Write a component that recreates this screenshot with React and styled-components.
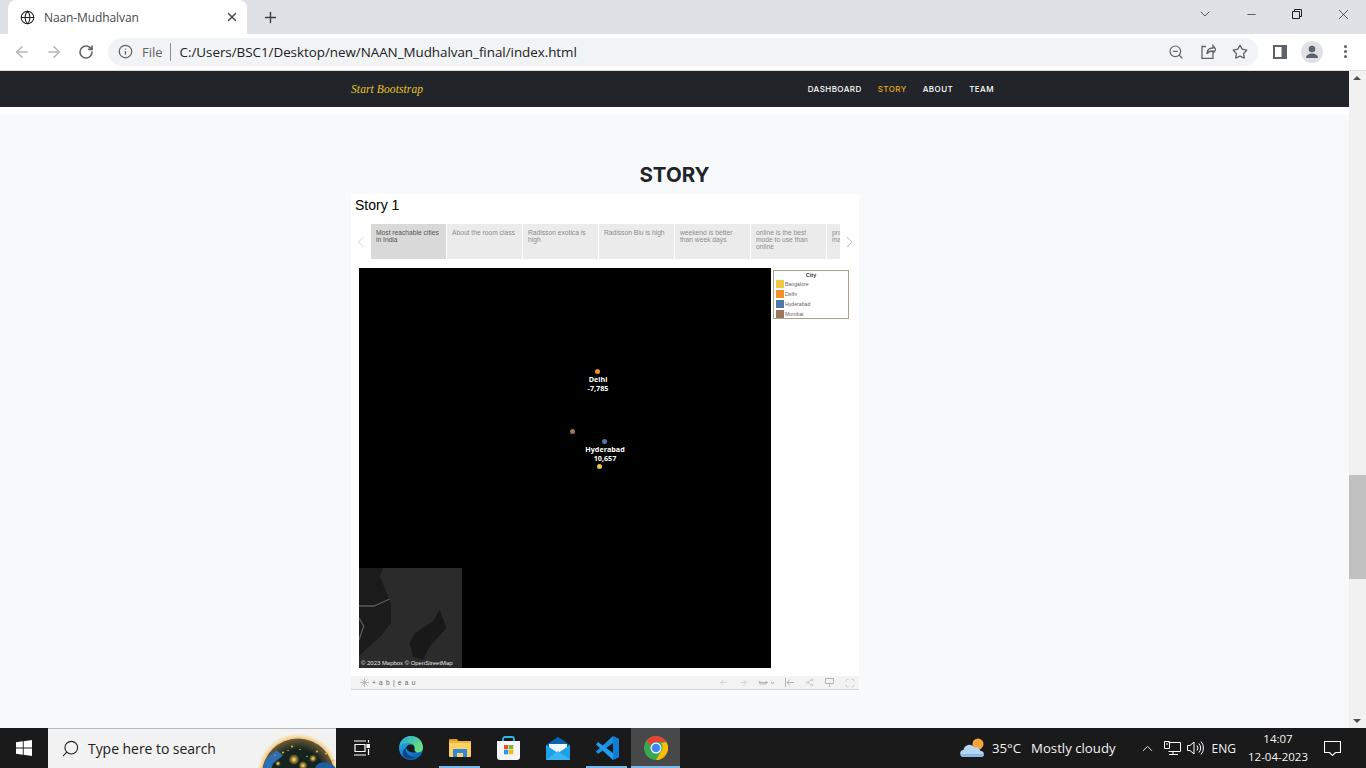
import React from "react";
import styled, { createGlobalStyle } from "styled-components";
import { ArrowLeft, ArrowRight, RotateCw, Info, ZoomOut, Star, MoreVertical, Globe, X, Plus, Search, ChevronDown, ChevronUp, ChevronLeft, ChevronRight, Minus, Share2, Maximize } from "lucide-react";

const Global = createGlobalStyle`
  html, body { margin: 0; padding: 0; height: 100%; overflow: hidden; }
  * { box-sizing: border-box; }
  #root { height: 768px; }
`;

const Screen = styled.div`
  width: 1366px; height: 768px; display: flex; flex-direction: column; overflow: hidden;
  background: #fff; font-family: "Open Sans", "Liberation Sans", sans-serif;
`;

const TabStrip = styled.div`
  height: 34px; flex: none; background: #dee1e6; display: flex; align-items: stretch; padding-left: 8px; color: #3c4043;
`;
const Tab = styled.div`
  width: 239px; background: #fff; border-radius: 8px 8px 0 0; display: flex; align-items: center; padding: 0 8px 0 12px;
`;
const TabTitle = styled.span`
  font-size: 12px; margin-left: 9px; flex: 1; color: #45484c; letter-spacing: -0.1px; white-space: nowrap;
`;
const NewTab = styled.div`
  width: 46px; display: flex; align-items: center; justify-content: center; color: #3c4043;
`;
const StripSpacer = styled.div`flex: 1;`;
const WinButton = styled.div`
  width: 46px; display: flex; align-items: center; justify-content: center; color: #202124; padding-bottom: 6px;
`;

const Toolbar = styled.div`
  height: 37px; flex: none; background: #fff; display: flex; align-items: center; padding: 0 0 1px 6px; border-bottom: 1px solid #dadce0;
`;
const NavIcon = styled.div`
  width: 32px; margin-left: ${p => p.$m || 0}px; display: flex; align-items: center; justify-content: center; color: ${p => (p.$off ? "#b4b6b9" : "#5f6368")};
`;
const Omnibox = styled.div`
  width: 1150px; height: 28px; margin-left: 6px; border-radius: 14px; background: #f1f3f4; display: flex; align-items: center; padding: 0 2px 0 10px;
`;
const FileLabel = styled.span`
  font-size: 13px; color: #5f6368; margin-left: 9px; padding-right: 7px; border-right: 1px solid #8b8e92; line-height: 18px;
`;
const Url = styled.span`
  font-size: 13.4px; color: #202124; margin-left: 9px; flex: 1; white-space: nowrap; letter-spacing: -0.03px;
`;
const OmniIcon = styled.div`
  width: 32px; display: flex; justify-content: center; color: #5f6368;
`;
const Avatar = styled.div`
  width: 22px; height: 22px; margin-left: 5px; border-radius: 50%; background: #dee1e6; overflow: hidden; display: flex; align-items: center; justify-content: center;
`;

const Main = styled.div`
  flex: 1; min-height: 0; display: flex; background: #f8f9fa;
`;
const Page = styled.div`
  flex: 1; min-width: 0; display: flex; flex-direction: column;
`;
const Navbar = styled.nav`
  height: 36px; flex: none; background: #212529; display: flex; justify-content: center; padding-bottom: 1px;
`;
const NavInner = styled.div`
  width: 647px; display: flex; align-items: center; justify-content: space-between;
`;
const Brand = styled.span`
  font-family: "Liberation Serif", serif; font-style: italic; font-size: 11.5px; color: #e9c02b; letter-spacing: 0.1px;
`;
const NavLinks = styled.div`
  display: flex; gap: 16px; padding-right: 4px;
`;
const NavLink = styled.span`
  font-family: Inter, "Liberation Sans", sans-serif; font-size: 8px; font-weight: 500; letter-spacing: 0.45px;
  color: ${p => (p.$active ? "#e8a818" : "#fff")};
`;
const WhiteBand = styled.div`height: 7px; background: #fff; flex: none;`;
const Section = styled.section`
  width: 647px; margin: 0 auto; padding-top: 48px; flex: 1;
`;
const Heading = styled.h2`
  margin: 0; height: 26px; line-height: 26px; text-align: center; font-family: Inter, "Liberation Sans", sans-serif; font-size: 20.5px; font-weight: 700; color: #212529;
`;

const Viz = styled.div`
  width: 508px; margin-top: 6px; background: #fff;
`;
const StoryTitle = styled.div`
  height: 30px; padding: 3px 0 0 4px; font-family: "Liberation Sans", sans-serif; font-size: 14px; line-height: 17px; color: #000;
`;
const Flow = styled.div`
  height: 35px; display: flex; align-items: center;
`;
const FlowArrow = styled.div`
  width: ${p => p.$w}px; flex: none; display: flex; justify-content: center; color: #c9c9c9;
`;
const FlowClip = styled.div`
  width: 469px; height: 35px; overflow: hidden; display: flex; gap: 1px;
`;
const FlowTab = styled.div`
  width: 75px; flex: none; height: 35px; padding: 5px 4px 0 5px; background: ${p => (p.$active ? "#d9d9d9" : "#ebebeb")};
  color: ${p => (p.$active ? "#555" : "#8c8c8c")}; font-family: "Liberation Sans", sans-serif; font-size: 6.7px; line-height: 7px; white-space: pre-line;
`;
const Board = styled.div`
  height: 417px; padding: 9px 0 0 8px; display: flex; align-items: flex-start; gap: 2px;
`;
const MapBox = styled.div`
  position: relative; width: 412px; height: 400px; background: #000; overflow: hidden;
`;
const Dot = styled.span`
  position: absolute; left: ${p => p.$x - 2.5}px; top: ${p => p.$y - 2.5}px; width: 5px; height: 5px; border-radius: 50%; background: ${p => p.$c};
`;
const MapLabel = styled.div`
  position: absolute; left: ${p => p.$x - 40}px; top: ${p => p.$y}px; width: 80px; text-align: center; color: #fff;
  font-family: "Open Sans", sans-serif; font-weight: 700; font-size: 7.2px; line-height: 9px;
`;
const Inset = styled.svg`
  position: absolute; left: 0; bottom: 0; display: block;
`;
const Credit = styled.span`
  position: absolute; left: 2px; bottom: 1px; color: #e8e8e8; font-family: "Liberation Sans", sans-serif; font-size: 5.95px; line-height: 7px; white-space: nowrap;
`;
const Legend = styled.div`
  width: 76px; height: 49px; margin-top: 2px; border: 1px solid #aaa58a; padding: 1px 2px;
  font-family: "Liberation Sans", sans-serif;
`;
const LegendTitle = styled.div`
  text-align: center; font-size: 5.6px; font-weight: 700; line-height: 7px; color: #333; height: 7px;
`;
const LegendRow = styled.div`
  height: 10px; display: flex; align-items: center; gap: 1px; font-size: 5.2px; color: #666;
`;
const Swatch = styled.span`
  width: 8px; height: 8px; flex: none; background: ${p => p.$c};
`;
const VizBar = styled.div`
  height: 14px; background: #f3f3f3; border-bottom: 1px solid #d4d4d4; display: flex; align-items: center; padding: 0 4px 0 9px; color: #c4c4c4;
`;
const Wordmark = styled.span`
  font-family: "Liberation Sans", sans-serif; font-size: 6.5px; letter-spacing: 0.75px; color: #666; margin-left: 3px; flex: 1;
`;
const BarIcons = styled.div`
  display: flex; align-items: center; gap: 11px; color: #b4b4b4;
`;

const Scrollbar = styled.div`
  width: 17px; flex: none; background: #f1f1f1; position: relative;
`;
const ArrowCap = styled.div`
  position: absolute; left: 4px; ${p => (p.$down ? "bottom: 5px" : "top: 5px")}; width: 0; height: 0;
  border-left: 4px solid transparent; border-right: 4px solid transparent;
  ${p => (p.$down ? "border-top: 4px solid #505050" : "border-bottom: 4px solid #505050")};
`;
const Thumb = styled.div`
  position: absolute; left: 0; right: 0; top: 404px; height: 104px; background: #c1c1c1;
`;

const Taskbar = styled.div`
  height: 40px; flex: none; background: #1a1a1a; display: flex; align-items: stretch; color: #fff;
`;
const StartBtn = styled.div`
  width: 48px; display: flex; align-items: center; justify-content: center;
`;
const SearchBox = styled.div`
  width: 288px; position: relative; overflow: hidden; background: #f2f2f2; border-top: 1px solid #b9b9b9; display: flex; align-items: center; padding-left: 13px; color: #202020;
`;
const SearchText = styled.span`
  font-size: 14px; margin-left: 8px; letter-spacing: -0.05px;
`;
const Flipped = styled.span`
  display: flex; transform: scaleX(-1);
`;
const Banner = styled.svg`
  position: absolute; right: 0; top: -1px;
`;
const Slots = styled.div`
  display: flex; margin-left: 1px;
`;
const Slot = styled.div`
  position: relative; width: 49px; display: flex; align-items: center; justify-content: center;
  background: ${p => (p.$active ? "#484848" : "transparent")};
  &::after {
    content: ""; position: absolute; left: ${p => (p.$open ? 4 : 0)}px; right: ${p => (p.$open ? 4 : 0)}px; bottom: 0; height: 2px;
    background: ${p => (p.$open || p.$active ? "#76b9ed" : "transparent")};
  }
`;
const Tray = styled.div`
  margin-left: auto; display: flex; align-items: center; padding-right: 25px;
`;
const TrayText = styled.span`
  font-size: ${p => p.$s || 13.2}px; margin-left: ${p => p.$m || 0}px; white-space: nowrap; color: #f3f3f3;
`;
const TrayIcon = styled.span`
  display: flex; margin-left: ${p => p.$m || 0}px;
`;
const Clock = styled.div`
  width: 70px; margin-left: 7px; text-align: center; font-size: 11.5px; line-height: 18px; color: #f3f3f3; white-space: nowrap;
`;

const Thin = styled.svg`
  display: block; fill: none; stroke: currentColor;
`;

const tabs = [
  "Most reachable cities in India",
  "About the room class",
  "Radisson exotica is high",
  "Radisson Blu is high",
  "weekend is better than week days",
  "online is the best mode to use than online",
  "pro\nma",
];
const cities = [
  ["Bangalore", "#edc948"],
  ["Delhi", "#f28e2b"],
  ["Hyderabad", "#4e79a7"],
  ["Mumbai", "#9c755f"],
];
const taskIcons = [
  { k: "view" }, { k: "edge" }, { k: "folder", open: true }, { k: "store" }, { k: "mail" }, { k: "code", open: true }, { k: "chrome", active: true },
];
const glows = [
  [39, 31, 5], [58, 30, 3.5], [48, 37, 4], [23, 35, 2.5], [28, 24, 1.5], [37, 18, 1.5], [45, 21, 1], [62, 23, 1.5], [71, 25, 1.5], [52, 28, 1], [78, 32, 1], [20, 27, 1], [33, 22, 1],
];

function TaskIcon({ k }) {
  if (k === "view") return (
    <Thin width="16" height="16" viewBox="0 0 16 16" strokeWidth="1.2" stroke="#fff">
      <path d="M0 1h12M0 15h12M1 4.500h10v7H1zM14.500 0v2.500M14.500 9v6" />
      <path d="M13 4.500h3v3h-3z" fill="#fff" />
    </Thin>
  );
  if (k === "edge") return (
    <svg width="24" height="24" viewBox="0 0 24 24">
      <defs>
        <linearGradient id="eg" x1="0" y1="0" x2="0.6" y2="1"><stop offset="0" stopColor="#2ab6ec" /><stop offset="1" stopColor="#0b62b4" /></linearGradient>
        <linearGradient id="eg2" x1="0" y1="0" x2="1" y2="0.6"><stop offset="0" stopColor="#21a8d8" /><stop offset="1" stopColor="#6ce07c" /></linearGradient>
      </defs>
      <circle cx="12" cy="12" r="12" fill="url(#eg)" />
      <path d="M1.500 7C4 1.500 9 0 12 0c7 0 12 5.500 12 12 0 4-5 5.500-8 3.500-1-.7-1-1.500-.5-2.500.8-2-1-6-6.500-6-3 0-6 1-7.500 2-.5.300-.7-.500-.5-2z" fill="url(#eg2)" />
      <path d="M7 12c-1 5 3 9 9 9-3 2.500-8 2.500-11-.5-2-2.500-1-8 2-8.500z" fill="#123f8c" />
      <path d="M7 12c1-3 4-4.500 7-3 1 .5 1.500 2 1.500 4-.5 1 .5 2.500 1.500 3-3 1.500-8 0-10-4z" fill="#1a1a1a" />
    </svg>
  );
  if (k === "folder") return (
    <svg width="22" height="18" viewBox="0 0 22 18">
      <path d="M0 1a1 1 0 0 1 1-1h7l2 3H0z" fill="#d99a1e" />
      <rect x="0" y="2" width="22" height="16" rx="1" fill="#fcd267" />
      <rect x="0" y="2" width="22" height="2" fill="#f0b63a" />
      <path d="M4 18v-8h14v8h-4v-4H8v4z" fill="#2f88d8" />
    </svg>
  );
  if (k === "store") return (
    <svg width="23" height="24" viewBox="0 0 23 24">
      <path d="M6 6V3a2 2 0 0 1 2-2h7a2 2 0 0 1 2 2v3" fill="none" stroke="#32b4e8" strokeWidth="1.8" />
      <path d="M0 5h23v16a3 3 0 0 1-3 3H3a3 3 0 0 1-3-3z" fill="#f5f5f5" />
      <rect x="7" y="9" width="4.300" height="4.300" fill="#e8502a" />
      <rect x="12" y="9" width="4.300" height="4.300" fill="#7fba2c" />
      <rect x="7" y="14" width="4.300" height="4.300" fill="#1c9be6" />
      <rect x="12" y="14" width="4.300" height="4.300" fill="#fbb80e" />
    </svg>
  );
  if (k === "mail") return (
    <svg width="24" height="23" viewBox="0 0 24 23">
      <path d="M0 8 12 0l12 8v2H0z" fill="#0a64b4" />
      <path d="M3 7h18v7l-9 4-9-4z" fill="#f0f7fc" />
      <path d="M0 8l12 8 12-8v15H0z" fill="#1da1ea" />
      <path d="M0 23 12 14l12 9z" fill="#39b6f2" />
    </svg>
  );
  if (k === "code") return (
    <svg width="24" height="24" viewBox="0 0 24 24">
      <path d="M18 0 1 15.500 3 18 18 7z" fill="#1a8fe0" />
      <path d="M18 24 1 8.500 3 6 18 17z" fill="#1f9cf0" />
      <path d="M18 0l6 2.800v18.400L18 24z" fill="#0f7fd4" />
    </svg>
  );
  return (
    <svg width="24" height="24" viewBox="0 0 24 24">
      <circle cx="12" cy="12" r="12" fill="#34a853" />
      <path d="M12 0a12 12 0 0 1 10.400 6H12a6 6 0 0 0-5.500 3.600L2.400 4.800A12 12 0 0 1 12 0z" fill="#ea4335" />
      <path d="M22.400 6A12 12 0 0 1 12 24l5.200-9A6 6 0 0 0 17 7z" fill="#fbbc05" />
      <circle cx="12" cy="12" r="5.500" fill="#fff" />
      <circle cx="12" cy="12" r="4.300" fill="#4285f4" />
    </svg>
  );
}

export default function App() {
  return (
    <Screen>
      <Global />
      <TabStrip>
        <Tab>
          <Globe size={15} color="#202124" strokeWidth={1.7} />
          <TabTitle>Naan-Mudhalvan</TabTitle>
          <X size={14} color="#45484c" strokeWidth={2.4} />
        </Tab>
        <NewTab><Plus size={17} strokeWidth={2} /></NewTab>
        <StripSpacer />
        <WinButton><ChevronDown size={16} strokeWidth={1.1} /></WinButton>
        <WinButton><Minus size={13} strokeWidth={1.2} /></WinButton>
        <WinButton>
          <Thin width="10" height="10" viewBox="0 0 10 10" strokeWidth="1"><path d="M.5 2.500h7v7h-7zM2.500 2.500v-2h7v7h-2" /></Thin>
        </WinButton>
        <WinButton><X size={17} strokeWidth={1} /></WinButton>
      </TabStrip>
      <Toolbar>
        <NavIcon $off><ArrowLeft size={18} strokeWidth={2} /></NavIcon>
        <NavIcon $off><ArrowRight size={18} strokeWidth={2} /></NavIcon>
        <NavIcon><RotateCw size={16} strokeWidth={2.4} /></NavIcon>
        <Omnibox>
          <Info size={15} color="#5f6368" strokeWidth={2} />
          <FileLabel>File</FileLabel>
          <Url>C:/Users/BSC1/Desktop/new/NAAN_Mudhalvan_final/index.html</Url>
          <OmniIcon><ZoomOut size={16} strokeWidth={1.8} /></OmniIcon>
          <OmniIcon>
            <Thin width="15" height="15" viewBox="0 0 15 15" strokeWidth="1.3"><path d="M5 2.500H1v12h11v-4M6 10c0-4 2.500-6 6-6V1.500l3 4-3 4V7c-3 0-5 1-6 3z" /></Thin>
          </OmniIcon>
          <OmniIcon><Star size={16} strokeWidth={1.9} /></OmniIcon>
        </Omnibox>
        <NavIcon $m={6}>
          <Thin width="14" height="14" viewBox="0 0 14 14" strokeWidth="2"><path d="M1 1h12v12H1z" /><path d="M9.500 1h3.500v12H9.500z" fill="#5f6368" /></Thin>
        </NavIcon>
        <Avatar>
          <svg width="16" height="18" viewBox="0 0 16 18">
            <circle cx="8" cy="6" r="3.300" fill="#5f6368" />
            <path d="M2 15c0-3 3-4.500 6-4.500s6 1.500 6 4.500z" fill="#5f6368" />
          </svg>
        </Avatar>
        <NavIcon $m={6}><MoreVertical size={17} strokeWidth={2.4} /></NavIcon>
      </Toolbar>

      <Main>
        <Page>
          <Navbar>
            <NavInner>
              <Brand>Start Bootstrap</Brand>
              <NavLinks>
                <NavLink>DASHBOARD</NavLink>
                <NavLink $active>STORY</NavLink>
                <NavLink>ABOUT</NavLink>
                <NavLink>TEAM</NavLink>
              </NavLinks>
            </NavInner>
          </Navbar>
          <WhiteBand />
          <Section>
            <Heading>STORY</Heading>
            <Viz>
              <StoryTitle>Story 1</StoryTitle>
              <Flow>
                <FlowArrow $w={20}><ChevronLeft size={20} strokeWidth={1} /></FlowArrow>
                <FlowClip>
                  {tabs.map((t, i) => <FlowTab key={t} $active={i === 0}>{t}</FlowTab>)}
                </FlowClip>
                <FlowArrow $w={19}><ChevronRight size={20} strokeWidth={1} color="#aaa" /></FlowArrow>
              </Flow>
              <Board>
                <MapBox>
                  <Dot $x={238} $y={103} $c="#f28e2b" />
                  <MapLabel $x={239} $y={107}>Delhi<br />-7,785</MapLabel>
                  <Dot $x={213.5} $y={163.5} $c="#9c755f" />
                  <Dot $x={245} $y={173} $c="#4e79a7" />
                  <MapLabel $x={246} $y={177}>Hyderabad<br />10,657</MapLabel>
                  <Dot $x={240.5} $y={198.5} $c="#edc948" />
                  <Inset width="103" height="100" viewBox="0 0 103 100">
                    <rect width="103" height="100" fill="#2b2b2b" />
                    <path d="M0 0h24l-3.300 8L32 35v20L22 68 10.700 78 0 88z" fill="#1b1b1b" />
                    <path d="M80.700 41.700 87.400 60 70.700 78.400 64 91.700 54 88.400 50.700 75 55.700 65 74 53.400z" fill="#191919" />
                    <path d="M0 38 15 38 30.700 31M0 50 4.700 58 0 72" fill="none" stroke="#5a5a5a" strokeWidth="1.300" />
                  </Inset>
                  <Credit>© 2023 Mapbox  © OpenStreetMap</Credit>
                </MapBox>
                <Legend>
                  <LegendTitle>City</LegendTitle>
                  {cities.map(([n, c]) => <LegendRow key={n}><Swatch $c={c} />{n}</LegendRow>)}
                </Legend>
              </Board>
              <VizBar>
                <svg width="9" height="9" viewBox="0 0 9 9">
                  <path d="M4.500 0v9M0 4.500h9M1.500 1.500l6 6M7.500 1.500l-6 6" stroke="#bbb" strokeWidth="1" />
                </svg>
                <Wordmark>+ a b | e a u</Wordmark>
                <BarIcons>
                  <ArrowLeft size={9} strokeWidth={1.2} />
                  <ArrowRight size={9} strokeWidth={1.2} />
                  <Thin width="15" height="9" viewBox="0 0 15 9" strokeWidth="1"><path d="M0 4.500h9M1 3a2 2 0 0 0 0 3h6a2 2 0 0 0 0-3M12 4l1.500 2L15 4" /></Thin>
                  <Thin width="9" height="9" viewBox="0 0 9 9" strokeWidth="1"><path d="M.5 0v9M9 4.500H2M5 1.500 2 4.500l3 3" /></Thin>
                  <Share2 size={9} strokeWidth={1.2} />
                  <Thin width="9" height="9" viewBox="0 0 9 9" strokeWidth="1"><path d="M.5.500h8v5h-8zM4.500 5.500V9" /></Thin>
                  <Maximize size={10} strokeWidth={1.2} />
                </BarIcons>
              </VizBar>
            </Viz>
          </Section>
        </Page>
        <Scrollbar>
          <ArrowCap />
          <Thumb />
          <ArrowCap $down />
        </Scrollbar>
      </Main>

      <Taskbar>
        <StartBtn>
          <svg width="16" height="16" viewBox="0 0 16 16">
            <path d="M0 2.300 6.800 1.300v6.200H0zM7.700 1.200 16 0v7.500H7.700zM0 8.400h6.800v6.300L0 13.700zM7.700 8.400H16V16l-8.300-1.200z" fill="#fff" />
          </svg>
        </StartBtn>
        <SearchBox>
          <Flipped><Search size={19} strokeWidth={1.4} /></Flipped>
          <SearchText>Type here to search</SearchText>
          <Banner width="81" height="41" viewBox="0 0 81 40">
            <defs>
              <radialGradient id="halo" cx="43" cy="46" r="41" gradientUnits="userSpaceOnUse">
                <stop offset="0.85" stopColor="#eeb44c" />
                <stop offset="1" stopColor="#f8e6be" stopOpacity="0.3" />
              </radialGradient>
              <radialGradient id="core" cx="43" cy="46" r="36" gradientUnits="userSpaceOnUse">
                <stop offset="0.7" stopColor="#16241f" />
                <stop offset="1" stopColor="#6b5a38" />
              </radialGradient>
              <radialGradient id="glow">
                <stop offset="0.2" stopColor="#f3c451" />
                <stop offset="1" stopColor="#a07c28" stopOpacity="0.3" />
              </radialGradient>
            </defs>
            <circle cx="43" cy="46" r="41" fill="url(#halo)" />
            <circle cx="43" cy="46" r="36" fill="url(#core)" />
            <path d="M8 40c1-8 6-14 14-18l6 5-10 8-2 5z" fill="#2d6fb5" />
            <path d="M60 40c1-5 6-7 12-6 4 1 7 3 9 6z" fill="#1f5d9e" />
            {glows.map(([x, y, r]) => <circle key={`${x}-${y}`} cx={x} cy={y} r={r} fill="url(#glow)" />)}
          </Banner>
        </SearchBox>
        <Slots>
          {taskIcons.map(t => (
            <Slot key={t.k} $open={t.open} $active={t.active}><TaskIcon k={t.k} /></Slot>
          ))}
        </Slots>
        <Tray>
          <TrayIcon>
            <svg width="25" height="20" viewBox="0 0 25 20">
              <circle cx="18" cy="6" r="5.500" fill="#f4a43a" />
              <path d="M4 19a3.500 3.500 0 0 1-.5-7 6 6 0 0 1 11-2.500A5 5 0 0 1 20.500 13 3 3 0 0 1 21 19z" fill="#b6d5f2" />
              <path d="M4 19a3.500 3.500 0 0 1-3-3h23a3 3 0 0 1-3 3z" fill="#8bb8e4" />
            </svg>
          </TrayIcon>
          <TrayText $m={7}>35°C</TrayText>
          <TrayText $m={10}>Mostly cloudy</TrayText>
          <TrayIcon $m={23}><ChevronUp size={17} strokeWidth={1.2} /></TrayIcon>
          <TrayIcon $m={8}>
            <Thin width="17" height="15" viewBox="0 0 17 15" strokeWidth="1"><path d="M4.500 1.500h12v9h-12M.5.500h5v7h-5zM2 3h2M9 10.500v3M5 13.500h9" /></Thin>
          </TrayIcon>
          <TrayIcon $m={6}>
            <Thin width="17" height="14" viewBox="0 0 17 14" strokeWidth="1"><path d="M.5 4.500h2.500L7 1v12L3 9.500H.5zM10 4.500a4 4 0 0 1 0 5M12 2.500a7 7 0 0 1 0 9M14 .5a10 10 0 0 1 0 13" /></Thin>
          </TrayIcon>
          <TrayText $m={8} $s={12}>ENG</TrayText>
          <Clock>14:07<br />12-04-2023</Clock>
          <TrayIcon $m={11}>
            <Thin width="17" height="15" viewBox="0 0 17 15" strokeWidth="1.100"><path d="M.5.500h16v11h-5l-3 3-3-3h-5z" /></Thin>
          </TrayIcon>
        </Tray>
      </Taskbar>
    </Screen>
  );
}
